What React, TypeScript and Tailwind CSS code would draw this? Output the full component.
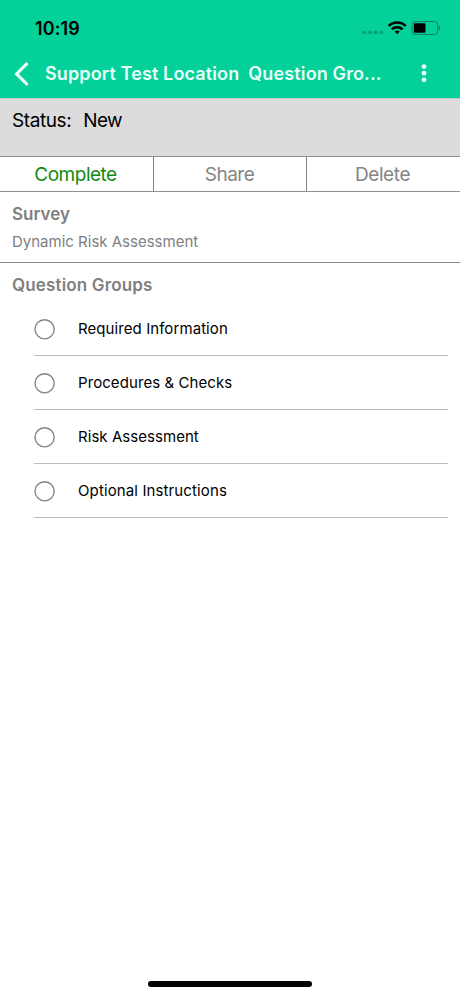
import React from "react";

const groups = [
  { label: "Required Information", tracking: "tracking-[0.08px]" },
  { label: "Procedures & Checks", tracking: "tracking-[0.08px]" },
  { label: "Risk Assessment", tracking: "tracking-[0.05px]" },
  { label: "Optional Instructions", tracking: "tracking-[0.12px]" },
];

function StatusBar() {
  return (
    <div className="flex h-[56px] items-center justify-between pl-[35px] pr-[20px] text-black">
      <span className="mt-px text-[18px] font-semibold leading-none tracking-[0.1px]">10:19</span>
      <svg width="78" height="16" viewBox="0 0 78 16" fill="none">
        <g fill="#079f76">
          <rect x="0.5" y="10.7" width="3.8" height="3.4" rx="1.2" />
          <rect x="6.1" y="10.7" width="3.8" height="3.4" rx="1.2" />
          <rect x="11.7" y="10.7" width="3.8" height="3.4" rx="1.2" />
          <rect x="17.3" y="10.7" width="3.8" height="3.4" rx="1.2" />
        </g>
        <g stroke="#000" strokeWidth="2.6">
          <path d="M26.7 6.1a12 12 0 0 1 17 0" />
          <path d="M29.8 9.4a7.6 7.6 0 0 1 10.8 0" />
        </g>
        <path d="M35.2 14.2l-2.5-2.6a3.6 3.6 0 0 1 5 0z" fill="#000" />
        <rect x="50" y="1.5" width="25.6" height="13" rx="3" stroke="#078561" />
        <rect x="51.8" y="3.3" width="11.7" height="9.4" rx="1.3" fill="#000" />
        <path d="M77.3 6v4" stroke="#078561" strokeWidth="1.4" />
      </svg>
    </div>
  );
}

function TitleBar() {
  return (
    <div className="flex h-[42px] items-center text-[#e9fff9]">
      <svg className="ml-[14px] mt-[-7px] shrink-0" width="15" height="24" viewBox="0 0 15 24" fill="none">
        <path d="M12.6 1.9L2.6 11.9l10 10" stroke="currentColor" strokeWidth="3.1" strokeLinecap="round" strokeLinejoin="miter" />
      </svg>
      <div className="mt-[-7px] ml-[16px] flex grow gap-[9px] whitespace-nowrap text-[18px] font-semibold leading-[24px] tracking-[0.13px]">
        <span>Support Test Location</span>
        <span>Question Gro...</span>
      </div>
      <svg className="mt-[-9px] mr-[33px] shrink-0" width="6" height="20" viewBox="0 0 6 20" fill="currentColor">
        <circle cx="3" cy="3.6" r="2.4" />
        <circle cx="3" cy="10.2" r="2.4" />
        <circle cx="3" cy="16.8" r="2.4" />
      </svg>
    </div>
  );
}

export default function App() {
  return (
    <div className="flex h-[996px] w-[460px] flex-col overflow-hidden bg-white font-['Inter',sans-serif] text-black">
      <header className="h-[98px] shrink-0 bg-[#04d099]">
        <StatusBar />
        <TitleBar />
      </header>
      <div className="flex h-[58px] shrink-0 gap-[12px] border-t border-[#c4c8c7] bg-[#dcdcdc] pl-[12px] pt-[10px] text-[19px] leading-[24px]">
        <span className="tracking-[-0.4px]">Status:</span>
        <span className="tracking-[-0.7px]">New</span>
      </div>
      <div className="grid h-[36px] shrink-0 grid-cols-[154px_153px_153px] border-y border-[#909090] text-center text-[19px] leading-[32px] text-[#858585]">
        <button className="border-r border-[#808080] pt-[2px] pr-[2px] tracking-[-0.5px] text-[#138a13]">Complete</button>
        <button className="border-r border-[#808080] pt-[2px] pr-[1px] tracking-[-0.5px]">Share</button>
        <button className="pt-[2px] pr-[2px] tracking-[-0.4px]">Delete</button>
      </div>
      <section className="h-[71px] shrink-0 border-b border-[#858585] pl-[12px] pt-[10px] text-[#808080]">
        <h2 className="text-[17px] font-semibold leading-[24px]">Survey</h2>
        <p className="mt-[6px] text-[15px] leading-[20px]">Dynamic Risk Assessment</p>
      </section>
      <section className="pt-[10px]">
        <h2 className="pl-[12px] text-[17px] font-semibold leading-[24px] tracking-[0.15px] text-[#808080]">Question Groups</h2>
        <ul className="ml-[34px] mr-[12px] mt-[5px]">
          {groups.map((g) => (
            <li key={g.label} className="flex h-[54px] items-center border-b border-[#bcbcbc]">
              <svg className="shrink-0" width="21" height="22" viewBox="0 0 21 22" fill="none">
                <circle cx="10.6" cy="11.3" r="9.6" stroke="#858585" strokeWidth="1.4" />
              </svg>
              <span className={"ml-[23px] text-[15px] leading-[20px] " + g.tracking}>{g.label}</span>
            </li>
          ))}
        </ul>
      </section>
      <div className="mx-auto mt-auto mb-[9px] h-[6px] w-[164px] shrink-0 rounded-full bg-black" />
    </div>
  );
}
